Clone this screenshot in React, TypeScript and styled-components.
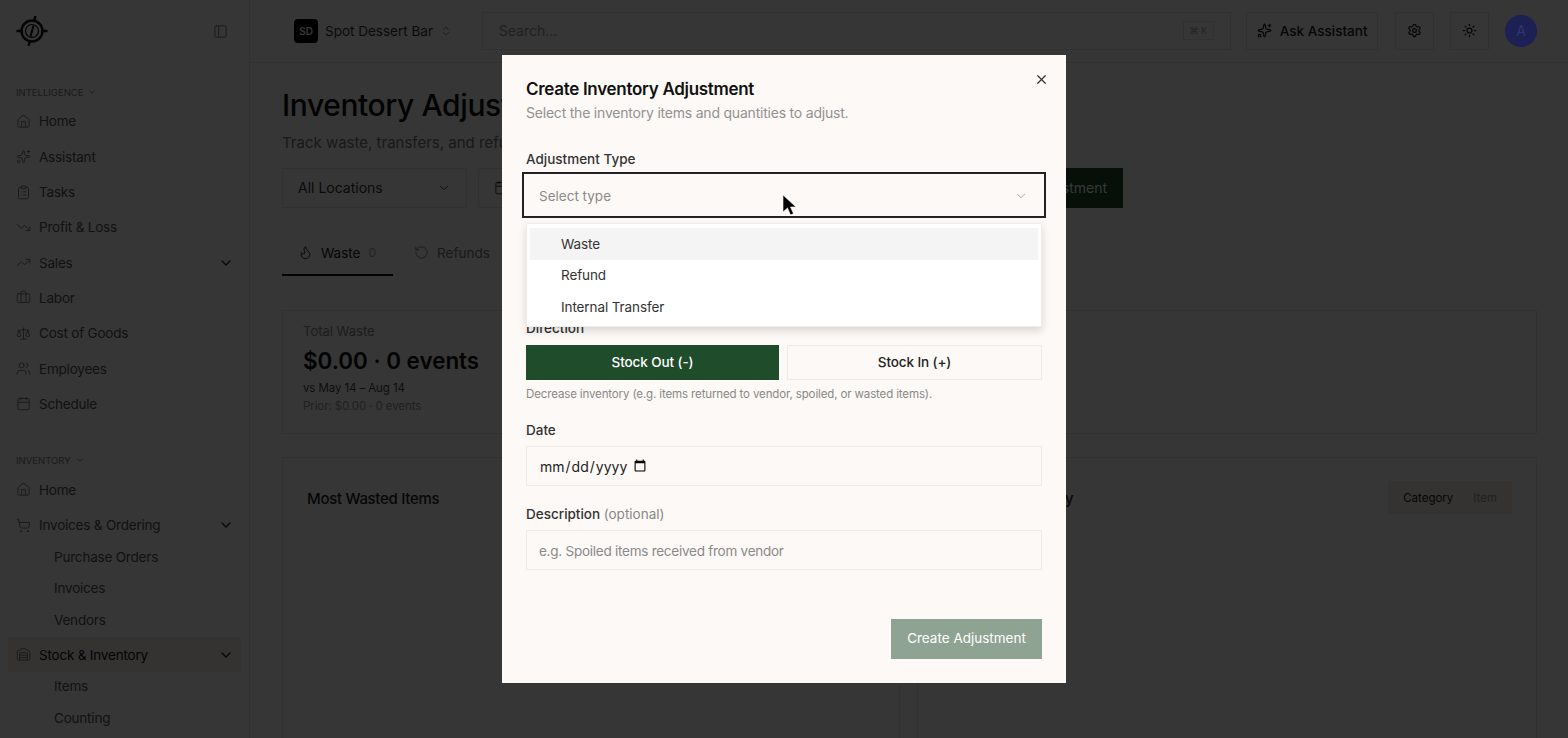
import React from 'react';
import styled, { createGlobalStyle } from 'styled-components';
import {
  Briefcase,
  Calendar,
  ChevronDown,
  ChevronsUpDown,
  ClipboardList,
  Flame,
  Home,
  PanelLeft,
  RotateCcw,
  Scale,
  Settings,
  ShoppingCart,
  Sparkles,
  Sun,
  TrendingDown,
  TrendingUp,
  Users,
  Warehouse,
  X,
} from 'lucide-react';

const GlobalStyle = createGlobalStyle`
  html, body {
    margin: 0;
    padding: 0;
    height: 100%;
    overflow: hidden;
    background: #fefdfc;
  }
  * {
    box-sizing: border-box;
  }
  body, input, button {
    font-family: Inter, "Liberation Sans", sans-serif;
  }
`;

const Page = styled.div`
  display: flex;
  width: 1568px;
  height: 738px;
  overflow: hidden;
  color: #111;
`;

const Sidebar = styled.aside`
  flex: 0 0 250px;
  border-right: 1px solid #ece7e3;
  padding: 16px 8px 0;
`;

const SidebarTop = styled.div`
  display: flex;
  align-items: center;
  justify-content: space-between;
  height: 30px;
  padding: 0 13px 0 8px;
  margin-bottom: 31px;
  color: #777;
`;

const SectionLabel = styled.div<{ $gap?: number }>`
  display: flex;
  align-items: center;
  gap: 4px;
  height: 30px;
  margin-bottom: -3.2px;
  padding: 0 8px;
  font-size: 9.5px;
  color: #7c7c7c;
  margin-top: ${(p) => p.$gap ?? 0}px;
`;

const NavRow = styled.div<{ $active?: boolean }>`
  display: flex;
  align-items: center;
  gap: 8px;
  height: 35.3px;
  padding: 0 7px 0 8px;
  font-size: 13.5px;
  letter-spacing: -0.2px;
  color: ${(p) => (p.$active ? '#111' : '#555')};
  background: ${(p) => (p.$active ? '#f3eeea' : 'transparent')};
  svg {
    color: #777;
    flex: 0 0 auto;
  }
`;

const NavText = styled.span`
  flex: 1;
`;

const SubList = styled.div`
  margin: -1.6px 0 1.6px;
`;

const SubRow = styled.div`
  display: flex;
  align-items: center;
  height: 31.4px;
  padding-left: 46px;
  font-size: 13.5px;
  letter-spacing: -0.2px;
  color: #555;
`;

const RowChevron = styled(ChevronDown)`
  && {
    color: #222;
  }
`;

const Column = styled.div`
  flex: 1;
  min-width: 0;
`;

const Header = styled.header`
  display: flex;
  align-items: center;
  height: 63px;
  padding: 0 31px 1px 44px;
  border-bottom: 1px solid #ece7e3;
`;

const Workspace = styled.div`
  display: flex;
  align-items: center;
  gap: 7px;
  width: 188px;
  font-size: 13.5px;
  color: #333;
  svg {
    color: #999;
  }
`;

const WorkspaceBadge = styled.span`
  display: flex;
  align-items: center;
  justify-content: center;
  width: 24px;
  height: 24px;
  border-radius: 4px;
  background: #000;
  color: #fff;
  font-size: 10px;
  font-weight: 600;
`;

const Search = styled.div`
  display: flex;
  align-items: center;
  justify-content: space-between;
  width: 750px;
  height: 38px;
  padding: 0 16px;
  border: 1px solid #ece7e3;
  font-size: 14px;
  color: #999;
`;

const Kbd = styled.span`
  padding: 3px 6px;
  border: 1px solid #ece7e3;
  font-size: 9px;
  color: #aaa;
`;

const HeaderButton = styled.div<{ $width: number; $gap: number }>`
  display: flex;
  align-items: center;
  justify-content: center;
  gap: 8px;
  width: ${(p) => p.$width}px;
  height: 38px;
  margin-left: ${(p) => p.$gap}px;
  border: 1px solid #ece7e3;
  font-size: 13.5px;
  font-weight: 500;
  color: #222;
`;

const Avatar = styled.div`
  position: relative;
  z-index: 20;
  display: flex;
  align-items: center;
  justify-content: center;
  width: 32px;
  height: 32px;
  margin-left: 16px;
  border-radius: 50%;
  background: #1c2054;
  color: #33366a;
  font-size: 14px;
`;

const Main = styled.main`
  padding: 23px 31px 0 32px;
`;

const Title = styled.h1`
  margin: 0;
  font-size: 30px;
  line-height: 38px;
  font-weight: 500;
  letter-spacing: -0.4px;
`;

const Subtitle = styled.p`
  margin: 8px 0 0;
  font-size: 15px;
  line-height: 22px;
  color: #777;
`;

const Filters = styled.div`
  display: flex;
  gap: 11px;
  margin-top: 13.5px;
`;

const FilterBox = styled.div<{ $width: number }>`
  display: flex;
  align-items: center;
  justify-content: space-between;
  width: ${(p) => p.$width}px;
  height: 40px;
  padding: 0 15px;
  border: 1px solid #ece7e3;
  font-size: 14px;
  color: #333;
`;

const DateFilter = styled(FilterBox)`
  justify-content: flex-start;
  gap: 8px;
`;

const PrimaryButton = styled.div`
  display: flex;
  align-items: center;
  justify-content: flex-end;
  width: 193px;
  height: 40px;
  padding-right: 16px;
  background: #1f4d2b;
  color: #fff;
  font-size: 14px;
`;

const Tabs = styled.div`
  display: flex;
  gap: 21px;
  margin-top: 27.5px;
`;

const Tab = styled.div<{ $active?: boolean }>`
  display: flex;
  align-items: center;
  gap: 8px;
  height: 41px;
  padding: 0 ${(p) => (p.$active ? 17 : 0)}px 4px ${(p) => (p.$active ? 16 : 0)}px;
  font-size: 13.5px;
  color: ${(p) => (p.$active ? '#222' : '#777')};
  border-bottom: 2px solid ${(p) => (p.$active ? '#111' : 'transparent')};
`;

const TabCount = styled.span`
  font-size: 12px;
  color: #aaa;
`;

const StatCard = styled.section`
  height: 124px;
  margin-top: 34px;
  padding: 11px 20px;
  border: 1px solid #ece7e3;
`;

const StatLabel = styled.div`
  font-size: 13px;
  line-height: 18px;
  color: #888;
`;

const StatValue = styled.div`
  margin-top: 5px;
  font-size: 22.4px;
  line-height: 32px;
  font-weight: 600;
`;

const StatCompare = styled.div`
  margin-top: 3px;
  font-size: 11.5px;
  letter-spacing: -0.1px;
  line-height: 17px;
  color: #444;
`;

const StatPrior = styled.div`
  font-size: 11.5px;
  letter-spacing: -0.1px;
  line-height: 18px;
  color: #999;
`;

const Panels = styled.div`
  display: grid;
  grid-template-columns: 618px 620px;
  gap: 17px;
  margin-top: 23px;
`;

const Panel = styled.section`
  display: flex;
  align-items: flex-start;
  justify-content: space-between;
  height: 320px;
  padding: 23px 24px;
  border: 1px solid #ece7e3;
`;

const PanelTitle = styled.h2`
  margin: 6px 0 0;
  font-size: 15px;
  letter-spacing: -0.3px;
  line-height: 24px;
  font-weight: 500;
  color: #222;
`;

const Segments = styled.div`
  display: flex;
  align-items: center;
  height: 33px;
  padding: 0 5px;
  background: #f3eeea;
  font-size: 11.5px;
`;

const Segment = styled.span<{ $active?: boolean }>`
  padding: 0 10px;
  color: ${(p) => (p.$active ? '#222' : '#999')};
`;

/* dialog layer */
const Overlay = styled.div`
  position: fixed;
  inset: 0;
  z-index: 10;
  background: rgba(0, 0, 0, 0.79);
  backdrop-filter: blur(0.6px);
`;

const Dialog = styled.div`
  position: fixed;
  z-index: 30;
  left: 502px;
  top: 55px;
  width: 564px;
  height: 628px;
  padding: 24px;
  background: #fdf9f6;
`;

const CloseButton = styled.button`
  position: absolute;
  top: 17px;
  right: 17px;
  display: flex;
  padding: 0;
  border: 0;
  background: none;
  color: #333;
`;

const DialogTitle = styled.h2`
  margin: 0;
  font-size: 17px;
  letter-spacing: -0.3px;
  line-height: 20px;
  font-weight: 600;
  color: #111;
`;

const DialogSubtitle = styled.p`
  margin: 4px 0 0;
  font-size: 14px;
  letter-spacing: -0.21px;
  line-height: 20px;
  color: #929292;
`;

const FieldLabel = styled.label<{ $top: number }>`
  display: block;
  margin-top: ${(p) => p.$top}px;
  font-size: 13.5px;
  line-height: 18px;
  font-weight: 500;
  color: #333;
`;

const Optional = styled.span`
  font-weight: 400;
  color: #888;
`;

const SelectBox = styled.div`
  display: flex;
  align-items: center;
  justify-content: space-between;
  height: 46px;
  margin: 4px -4px 0;
  padding: 1px 16px 0 15px;
  border: 2px solid #222;
  font-size: 13.5px;
  color: #8a8a8a;
`;

const Menu = styled.div`
  position: absolute;
  z-index: 2;
  left: 24px;
  right: 24px;
  top: 168px;
  height: 104px;
  padding: 4px 3px;
  background: #fff;
  border: 1px solid #f0ece8;
  box-shadow: 0 4px 8px rgba(0, 0, 0, 0.14);
`;

const MenuItem = styled.div<{ $active?: boolean }>`
  display: flex;
  align-items: center;
  height: 31.5px;
  padding-left: 31px;
  font-size: 13.5px;
  letter-spacing: -0.1px;
  color: #333;
  background: ${(p) => (p.$active ? '#f4f4f4' : 'transparent')};
`;

const DirectionRow = styled.div`
  display: grid;
  grid-template-columns: 253px 255px;
  gap: 8px;
  margin-top: 8px;
`;

const DirectionButton = styled.button<{ $active?: boolean }>`
  height: 35px;
  padding: 0 0 2px;
  border: 1px solid ${(p) => (p.$active ? '#1f4d2b' : '#efeae6')};
  background: ${(p) => (p.$active ? '#1f4d2b' : 'transparent')};
  color: ${(p) => (p.$active ? '#fff' : '#222')};
  font-size: 13.5px;
  letter-spacing: -0.1px;
  font-weight: 500;
`;

const Help = styled.p`
  margin: 7px 0 0;
  font-size: 11.5px;
  letter-spacing: -0.13px;
  line-height: 15px;
  color: #888;
`;

const TextField = styled.input`
  display: flex;
  width: 100%;
  height: 40px;
  margin-top: 7px;
  padding: 1px 12px 0;
  border: 1px solid #efeae6;
  border-radius: 0;
  outline: none;
  background: transparent;
  font-size: 13.5px;
  letter-spacing: -0.25px;
  color: #222;
  &::placeholder {
    color: #8a8a8a;
  }
`;

const DateField = styled(TextField)`
  padding-top: 0;
  font-size: 14px;
  letter-spacing: 0;
  &::-webkit-datetime-edit {
    flex: 0 0 auto;
  }
  &::-webkit-calendar-picker-indicator {
    margin: 0 0 0 -16px;
  }
`;

const DialogActions = styled.div`
  display: flex;
  justify-content: flex-end;
  margin-top: 49px;
`;

const SubmitButton = styled.button`
  width: 151px;
  height: 40px;
  padding: 0 0 2px;
  border: 0;
  background: #8fa392;
  color: #fff;
  font-size: 13.5px;
`;

const Pointer = styled.svg`
  position: absolute;
  z-index: 3;
  left: 280px;
  top: 139px;
`;

type NavItem = { icon: typeof Home; label: string; chevron?: boolean; active?: boolean };

const intelligence: NavItem[] = [
  { icon: Home, label: 'Home' },
  { icon: Sparkles, label: 'Assistant' },
  { icon: ClipboardList, label: 'Tasks' },
  { icon: TrendingDown, label: 'Profit & Loss' },
  { icon: TrendingUp, label: 'Sales', chevron: true },
  { icon: Briefcase, label: 'Labor' },
  { icon: Scale, label: 'Cost of Goods' },
  { icon: Users, label: 'Employees' },
  { icon: Calendar, label: 'Schedule' },
];

function Logo() {
  return (
    <svg width="32" height="32" viewBox="0 0 32 32" fill="none" stroke="#111" strokeWidth="2.4">
      <circle cx="16" cy="16" r="10.5" />
      <circle cx="16" cy="16" r="6.5" strokeWidth="1.2" />
      <path d="M19.500 1 17.800 7M12.500 31l1.700-6M0.500 16H7M25 16h6.500" />
      <path d="M17.500 10.500 14.500 21.500" strokeWidth="2" />
    </svg>
  );
}

function Row({ item }: { item: NavItem }) {
  const Icon = item.icon;
  return (
    <NavRow $active={item.active}>
      <Icon size={15} strokeWidth={1.5} />
      <NavText>{item.label}</NavText>
      {item.chevron && <RowChevron size={16} />}
    </NavRow>
  );
}

export default function App() {
  return (
    <>
      <GlobalStyle />
      <Page>
        <Sidebar>
          <SidebarTop>
            <Logo />
            <PanelLeft size={15} strokeWidth={1.5} />
          </SidebarTop>
          <SectionLabel>
            INTELLIGENCE <ChevronDown size={10} />
          </SectionLabel>
          {intelligence.map((item) => (
            <Row key={item.label} item={item} />
          ))}
          <SectionLabel $gap={24}>
            INVENTORY <ChevronDown size={10} />
          </SectionLabel>
          <Row item={{ icon: Home, label: 'Home' }} />
          <Row item={{ icon: ShoppingCart, label: 'Invoices & Ordering', chevron: true }} />
          <SubList>
            <SubRow>Purchase Orders</SubRow>
            <SubRow>Invoices</SubRow>
            <SubRow>Vendors</SubRow>
          </SubList>
          <Row item={{ icon: Warehouse, label: 'Stock & Inventory', chevron: true, active: true }} />
          <SubList>
            <SubRow>Items</SubRow>
            <SubRow>Counting</SubRow>
          </SubList>
        </Sidebar>
        <Column>
          <Header>
            <Workspace>
              <WorkspaceBadge>SD</WorkspaceBadge>
              Spot Dessert Bar
              <ChevronsUpDown size={12} />
            </Workspace>
            <Search>
              Search...
              <Kbd>⌘ K</Kbd>
            </Search>
            <HeaderButton $width={132} $gap={15}>
              <Sparkles size={15} />
              Ask Assistant
            </HeaderButton>
            <HeaderButton $width={39} $gap={17}>
              <Settings size={15} />
            </HeaderButton>
            <HeaderButton $width={39} $gap={16}>
              <Sun size={15} />
            </HeaderButton>
            <Avatar>A</Avatar>
          </Header>
          <Main>
            <Title>Inventory Adjustments</Title>
            <Subtitle>Track waste, transfers, and refunds across locations.</Subtitle>
            <Filters>
              <FilterBox $width={185}>
                All Locations
                <ChevronDown size={14} strokeWidth={1.5} />
              </FilterBox>
              <DateFilter $width={441}>
                <Calendar size={15} strokeWidth={1.5} />
                Aug 14 – Nov 14, 2025
              </DateFilter>
              <PrimaryButton>New Adjustment</PrimaryButton>
            </Filters>
            <Tabs>
              <Tab $active>
                <Flame size={15} strokeWidth={1.5} />
                Waste
                <TabCount>0</TabCount>
              </Tab>
              <Tab>
                <RotateCcw size={15} strokeWidth={1.5} />
                Refunds
              </Tab>
            </Tabs>
            <StatCard>
              <StatLabel>Total Waste</StatLabel>
              <StatValue>$0.00 · 0 events</StatValue>
              <StatCompare>vs May 14 – Aug 14</StatCompare>
              <StatPrior>Prior: $0.00 · 0 events</StatPrior>
            </StatCard>
            <Panels>
              <Panel>
                <PanelTitle>Most Wasted Items</PanelTitle>
              </Panel>
              <Panel>
                <PanelTitle>Waste by Category</PanelTitle>
                <Segments>
                  <Segment $active>Category</Segment>
                  <Segment>Item</Segment>
                </Segments>
              </Panel>
            </Panels>
          </Main>
        </Column>
      </Page>
      <Overlay />
      <Dialog>
        <CloseButton>
          <X size={15} />
        </CloseButton>
        <DialogTitle>Create Inventory Adjustment</DialogTitle>
        <DialogSubtitle>Select the inventory items and quantities to adjust.</DialogSubtitle>
        <FieldLabel $top={27}>Adjustment Type</FieldLabel>
        <SelectBox>
          Select type
          <ChevronDown size={14} strokeWidth={1.25} />
        </SelectBox>
        <Menu>
          <MenuItem $active>Waste</MenuItem>
          <MenuItem>Refund</MenuItem>
          <MenuItem>Internal Transfer</MenuItem>
        </Menu>
        <Pointer width="16" height="24" viewBox="0 0 16 24">
          <path d="M1 1v17l4.500-4 3 7 3-1.500-3-6.500H14z" fill="#000" stroke="#fdf9f6" strokeWidth="0.6" />
        </Pointer>
        <FieldLabel $top={101}>Direction</FieldLabel>
        <DirectionRow>
          <DirectionButton $active>Stock Out (-)</DirectionButton>
          <DirectionButton>Stock In (+)</DirectionButton>
        </DirectionRow>
        <Help>Decrease inventory (e.g. items returned to vendor, spoiled, or wasted items).</Help>
        <FieldLabel $top={19}>Date</FieldLabel>
        <DateField type="date" />
        <FieldLabel $top={19}>
          Description <Optional>(optional)</Optional>
        </FieldLabel>
        <TextField placeholder="e.g. Spoiled items received from vendor" />
        <DialogActions>
          <SubmitButton>Create Adjustment</SubmitButton>
        </DialogActions>
      </Dialog>
    </>
  );
}
